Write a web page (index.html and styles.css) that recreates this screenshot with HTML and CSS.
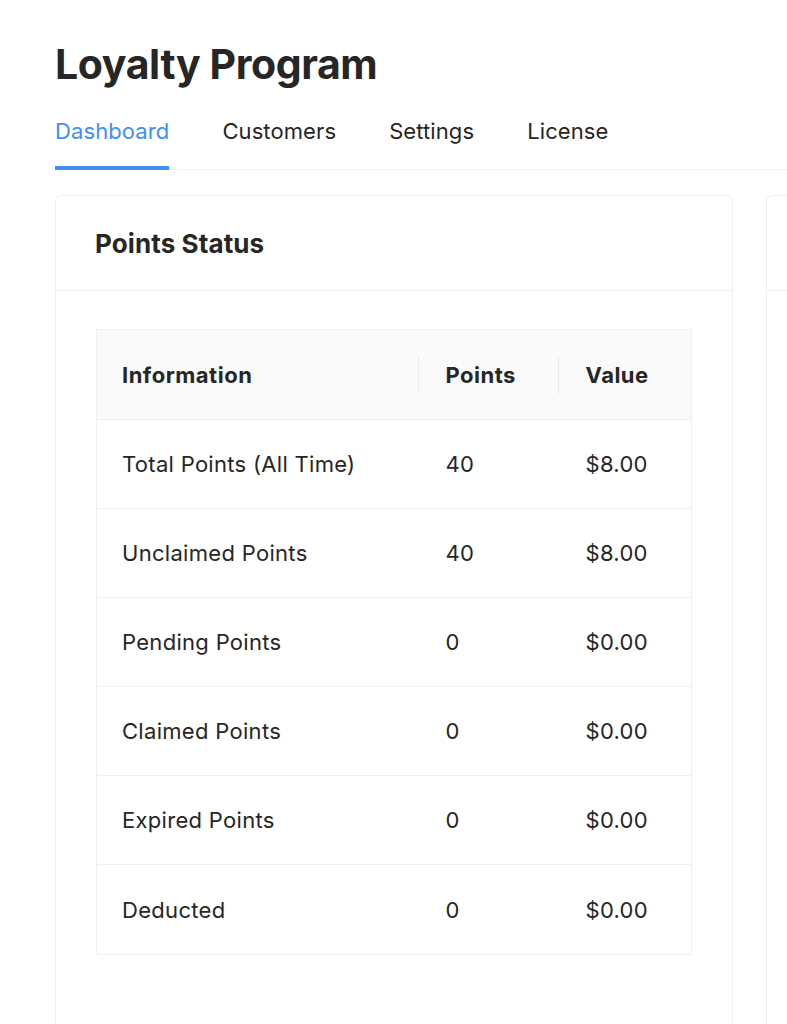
FILE: index.html
```html
<!DOCTYPE html>
<html lang="en">
<head>
<meta charset="utf-8">
<title>Loyalty Program</title>
<link rel="stylesheet" href="styles.css">
</head>
<body>
<div class="page">
  <h1 class="title">Loyalty Program</h1>
  <nav class="tabs">
    <a class="tab active">Dashboard</a>
    <a class="tab">Customers</a>
    <a class="tab">Settings</a>
    <a class="tab">License</a>
  </nav>
  <div class="cards">
    <section class="card">
      <div class="card-head">Points Status</div>
      <div class="card-body">
        <table class="tbl">
          <colgroup>
            <col class="c1"><col class="c2"><col class="c3">
          </colgroup>
          <thead>
            <tr><th>Information</th><th class="sep">Points</th><th class="sep">Value</th></tr>
          </thead>
          <tbody>
            <tr><td>Total Points (All Time)</td><td>40</td><td>$8.00</td></tr>
            <tr><td>Unclaimed Points</td><td>40</td><td>$8.00</td></tr>
            <tr><td>Pending Points</td><td>0</td><td>$0.00</td></tr>
            <tr><td>Claimed Points</td><td>0</td><td>$0.00</td></tr>
            <tr><td>Expired Points</td><td>0</td><td>$0.00</td></tr>
            <tr><td>Deducted</td><td>0</td><td>$0.00</td></tr>
          </tbody>
        </table>
      </div>
    </section>
    <section class="card card-side">
      <div class="card-head"></div>
      <div class="card-body"></div>
    </section>
  </div>
</div>
</body>
</html>
```
FILE: styles.css
```css
html, body {
  margin: 0;
  padding: 0;
  background: #ffffff;
  overflow: hidden;
}
body {
  font-family: Inter, "Liberation Sans", sans-serif;
  color: #262626;
}
.page {
  padding: 40px 0 0 55px;
}
.title {
  margin: 0;
  font-size: 41px;
  line-height: 48px;
  font-weight: 700;
  letter-spacing: -0.4px;
  color: #262626;
}
.tabs {
  display: flex;
  gap: 53px;
  margin-top: 28px;
  border-bottom: 1px solid #f0f0f0;
}
.tab {
  font-size: 22px;
  line-height: 30px;
  letter-spacing: 0.1px;
  padding-bottom: 20px;
  color: #262626;
  border-bottom: 4px solid transparent;
  margin-bottom: -1px;
}
.tab.active {
  color: #3f8ff7;
  border-bottom-color: #3f8ff7;
}
.cards {
  display: flex;
  gap: 33px;
  margin-top: 25px;
}
.card {
  flex: 0 0 677px;
  height: 900px;
  border: 1px solid #f0f0f0;
  border-radius: 6px;
  box-sizing: border-box;
}
.card-side {
  flex: 0 0 300px;
}
.card-head {
  height: 95px;
  box-sizing: border-box;
  border-bottom: 1px solid #f0f0f0;
  padding: 0 39px;
  display: flex;
  align-items: center;
  font-size: 26px;
  font-weight: 700;
  letter-spacing: 0.1px;
}
.card-body {
  padding: 38px 40px;
}
.tbl {
  width: 596px;
  border-collapse: collapse;
  table-layout: fixed;
  border: 1px solid #f0f0f0;
  font-size: 22px;
  letter-spacing: 0.3px;
}
.c1 { width: 322px; }
.c2 { width: 140px; }
.c3 { width: auto; }
.tbl th {
  background: #fafafa;
  height: 89px;
  text-align: left;
  font-weight: 700;
  padding: 0 24px 0 25px;
  border-bottom: 1px solid #f0f0f0;
  position: relative;
  letter-spacing: 0.5px;
}
.tbl th.sep::before {
  content: "";
  position: absolute;
  left: -1px;
  top: 50%;
  width: 1px;
  height: 38px;
  transform: translateY(-50%);
  background: #ebebeb;
}
.tbl td {
  height: 89px;
  padding: 0 24px 0 25px;
  border-bottom: 1px solid #f0f0f0;
  box-sizing: border-box;
}
.tbl th + th,
.tbl td + td {
  padding-left: 27px;
}
.tbl tbody tr:last-child td {
  border-bottom: none;
  height: 90px;
}
```
